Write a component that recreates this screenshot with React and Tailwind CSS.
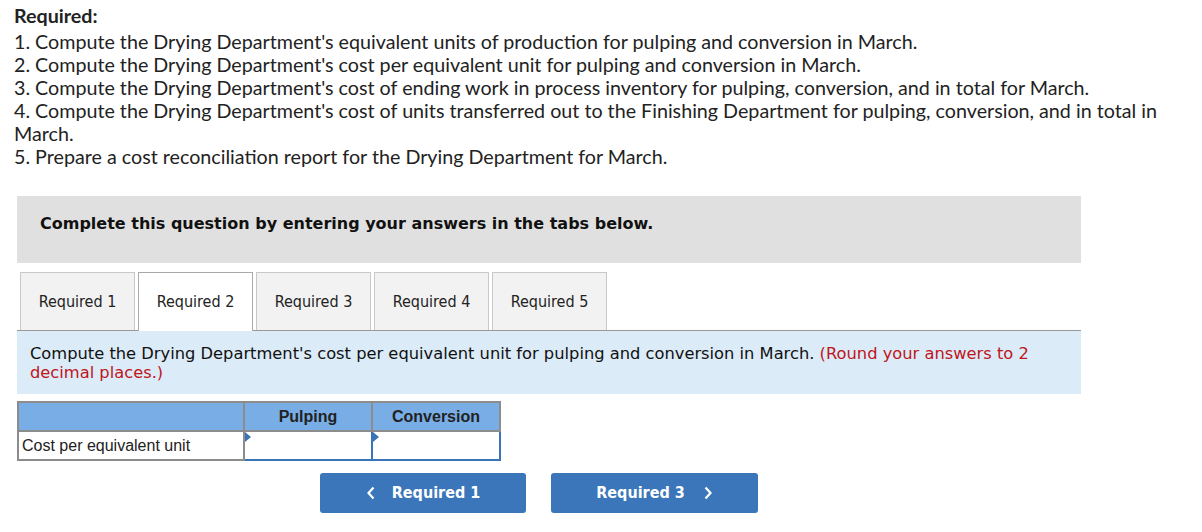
import React from "react";

const questions = [
  "1. Compute the Drying Department's equivalent units of production for pulping and conversion in March.",
  "2. Compute the Drying Department's cost per equivalent unit for pulping and conversion in March.",
  "3. Compute the Drying Department's cost of ending work in process inventory for pulping, conversion, and in total for March.",
  "4. Compute the Drying Department's cost of units transferred out to the Finishing Department for pulping, conversion, and in total in March.",
  "5. Prepare a cost reconciliation report for the Drying Department for March.",
];

const tabs = ["Required 1", "Required 2", "Required 3", "Required 4", "Required 5"];

function AnswerCell() {
  return (
    <td className="relative h-[29px] border-2 border-[#3a73b6] bg-white p-0">
      <span className="absolute left-0 top-0 h-0 w-0 border-y-[5px] border-l-[6px] border-y-transparent border-l-[#3a73b6]" />
    </td>
  );
}

export default function App() {
  return (
    <div className="min-h-[532px] bg-white pl-[14px] pt-[4px]">
      {/* Required list */}
      <div className="w-[1170px] font-['Lato',sans-serif] text-[19.7px] leading-[23px] text-[#222]">
        <p className="mb-[3px] font-bold">Required:</p>
        {questions.map((q) => (
          <p key={q}>{q}</p>
        ))}
      </div>

      <div className="ml-[3px] mt-[28px] w-[1064px]">
        {/* Instruction */}
        <div className="flex h-[67px] items-center bg-[#e0e0e0] pl-[23px] pb-[11px] font-['DejaVu_Sans',sans-serif] text-[16px] font-bold text-[#111]">
          Complete this question by entering your answers in the tabs below.
        </div>

        {/* Tabs */}
        <div className="mt-[9px] flex gap-[3px] border-b border-[#999] pl-[3px]">
          {tabs.map((t, i) => (
            <div
              key={t}
              className={
                i === 1
                  ? "-mb-px flex h-[59px] w-[115px] items-center justify-center border border-b-0 border-[#aaa] bg-white font-['DejaVu_Sans_Condensed','DejaVu_Sans',sans-serif] text-[16px] text-[#222]"
                  : "flex h-[58px] w-[115px] items-center justify-center border border-b-0 border-[#c8c8c8] bg-[#f2f2f2] font-['DejaVu_Sans_Condensed','DejaVu_Sans',sans-serif] text-[16px] text-[#222]"
              }
            >
              {t}
            </div>
          ))}
        </div>

        {/* Prompt */}
        <div className="h-[63px] bg-[#dbebf8] px-[13px] pt-[13px] font-['DejaVu_Sans',sans-serif] text-[16.3px] leading-[19px] text-[#111]">
          <p>
            Compute the Drying Department's cost per equivalent unit for pulping and conversion in March.{" "}
            <span className="text-[#c0151b]">(Round your answers to 2 decimal places.)</span>
          </p>
        </div>

        {/* Table */}
        <table className="mt-[7px] border-collapse font-['Liberation_Sans',Arial,sans-serif] text-[16px]">
          <thead>
            <tr className="h-[29px] bg-[#78ade6]">
              <th className="w-[226px] border-2 border-[#8c8c8c]" />
              <th className="w-[128px] border-2 border-[#8c8c8c] text-center font-bold text-[#222]">Pulping</th>
              <th className="w-[128px] border-2 border-[#8c8c8c] text-center font-bold text-[#222]">Conversion</th>
            </tr>
          </thead>
          <tbody>
            <tr>
              <td className="h-[29px] border-2 border-[#8c8c8c] pl-[3px] text-[#222]">Cost per equivalent unit</td>
              <AnswerCell />
              <AnswerCell />
            </tr>
          </tbody>
        </table>

        {/* Navigation */}
        <div className="mt-[12px] flex gap-[25px] pl-[303px] font-['DejaVu_Sans_Condensed','DejaVu_Sans',sans-serif] text-[16px] font-bold text-white">
          <button className="flex h-[40px] w-[206px] items-center justify-center gap-[16px] rounded-[3px] bg-[#3a76b9]">
            <svg width="10" height="14" viewBox="0 0 10 14" fill="none" stroke="white" strokeWidth="2.2">
              <path d="M7.5 1.5 2.5 7l5 5.5" />
            </svg>
            Required 1
          </button>
          <button className="flex h-[40px] w-[207px] items-center justify-center gap-[18px] rounded-[3px] bg-[#3a76b9]">
            Required 3
            <svg width="10" height="14" viewBox="0 0 10 14" fill="none" stroke="white" strokeWidth="2.2">
              <path d="M2.5 1.5 7.5 7l-5 5.5" />
            </svg>
          </button>
        </div>
      </div>
    </div>
  );
}
